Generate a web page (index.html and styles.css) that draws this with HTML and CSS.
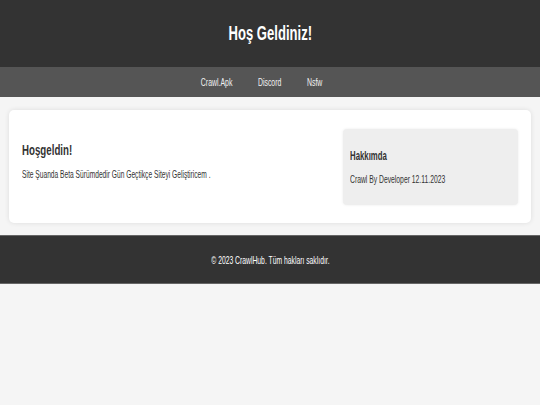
FILE: index.html
```html
<!DOCTYPE html>
<html lang="tr">
<head>
    <meta charset="UTF-8">
    <meta name="viewport" content="width=device-width, initial-scale=1.0">
    <title>CrawlHub</title>
    <link rel="stylesheet" href="styles.css">
</head>
<body>
    <header class="site-header">
        <h1 class="squeeze">Hoş Geldiniz!</h1>
    </header>

    <nav class="site-nav">
        <div class="nav-links squeeze">
            <a href="#">Crawl.Apk</a>
            <a href="#">Discord</a>
            <a href="#">Nsfw</a>
        </div>
    </nav>

    <main class="card">
        <section class="intro">
            <h2 class="squeeze-left">Hoşgeldin!</h2>
            <p class="squeeze-left">Site Şuanda Beta Sürümdedir Gün Geçtikçe Siteyi Geliştiricem .</p>
        </section>
        <aside class="about">
            <h3 class="squeeze-left">Hakkımda</h3>
            <p class="squeeze-left">Crawl By Developer 12.11.2023</p>
        </aside>
    </main>

    <footer class="site-footer">
        <p class="squeeze">&copy; 2023 CrawlHub. Tüm hakları saklıdır.</p>
    </footer>
</body>
</html>
```

FILE: styles.css
```css
body {
    margin: 0;
    font-family: "Liberation Sans", Arial, sans-serif;
    background-color: #f5f5f5;
    color: #333;
}

/* the text is drawn narrow, so squeeze the glyphs */
.squeeze {
    transform: scaleX(0.64);
    transform-origin: center;
}

.squeeze-left {
    transform: scaleX(0.64);
    transform-origin: left;
}

.site-header {
    height: 67px;
    background-color: #333;
    color: white;
    display: flex;
    align-items: center;
    justify-content: center;
}

.site-header h1 {
    margin: 0;
    font-size: 19.5px;
    line-height: 1;
    transform: scaleX(0.67);
}

.site-nav {
    height: 30px;
    background-color: #555;
    display: flex;
    align-items: center;
    justify-content: center;
}

.nav-links {
    display: flex;
    gap: 40px;
    padding-right: 26px;
}

.nav-links a {
    color: #f2f2f2;
    text-decoration: none;
    font-size: 10.8px;
}

.card {
    display: flex;
    align-items: flex-start;
    margin: 13px 9px 12px;
    padding: 19px 13px 18px;
    background-color: white;
    border-radius: 5px;
    box-shadow: 0 0 5px rgba(0, 0, 0, 0.1);
}

.intro {
    flex: 1;
}

.intro h2 {
    margin: 12px 0 0;
    font-size: 15.2px;
    line-height: 18px;
}

.intro p {
    margin: 10px 0 0;
    font-size: 10.4px;
    line-height: 12px;
}

.about {
    width: 161px;
    padding: 20px 7px 19px;
    background-color: #eee;
    border-radius: 4px;
    box-shadow: 0 0 3px rgba(0, 0, 0, 0.08);
}

.about h3 {
    margin: 0;
    font-size: 12.2px;
    line-height: 15px;
}

.about p {
    margin: 9px 0 0;
    font-size: 10.6px;
    line-height: 13px;
}

.site-footer {
    height: 47px;
    background-color: #333;
    border-top: 1px solid #666;
    border-bottom: 1px solid #666;
    color: white;
    display: flex;
    align-items: center;
    justify-content: center;
}

.site-footer p {
    margin: 0;
    font-size: 10.6px;
}
```
